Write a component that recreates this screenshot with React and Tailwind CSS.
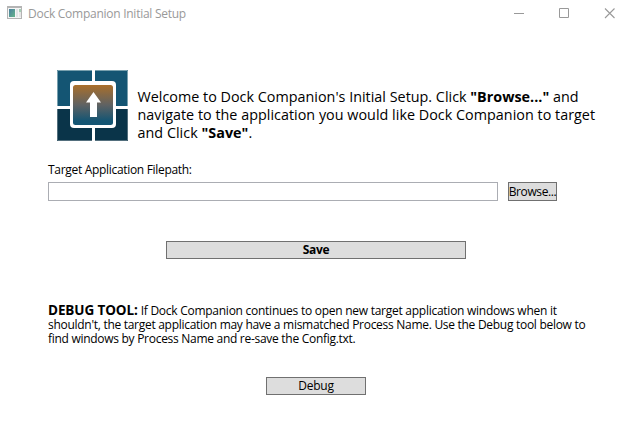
import React from "react";

function WindowIcon() {
  return (
    <svg className="block h-[13px] w-[15px]" viewBox="0 0 15 13" shapeRendering="crispEdges">
      <defs>
        <linearGradient id="pane" x1="0" y1="0" x2="1" y2="1">
          <stop offset="0" stopColor="#4a7f9f" />
          <stop offset="1" stopColor="#66b58a" />
        </linearGradient>
      </defs>
      <rect width="15" height="13" fill="#b4b4b4" />
      <rect x="1" y="2" width="13" height="10" fill="#f5f5f5" />
      <rect x="2" y="3" width="6" height="8" fill="url(#pane)" />
      <rect x="9" y="3" width="2" height="8" fill="#e2e4e6" />
      <rect x="12" y="3" width="2" height="3" fill="#a5cfb5" />
      <rect x="12" y="6" width="2" height="5" fill="#e6e6e6" />
    </svg>
  );
}

function TitleBar() {
  return (
    <header className="flex h-[30px] items-start pl-[7px] text-[#999999]">
      <div className="pt-[6px]"><WindowIcon /></div>
      <h1 className="ml-[6px] mt-[5px] w-[300px] whitespace-nowrap text-[12px] leading-[18px] tracking-[-0.26px]">
        Dock Companion Initial Setup
      </h1>
      <svg className="ml-[186px] mt-2 block h-[11px] w-[102px]" viewBox="0 0 102 11" fill="none" stroke="#999999">
        <path d="M0 5.5h10M45.5.5h9v9h-9z" />
        <path d="M91 .5l9.5 9.5M100.500 .5l-9.5 9.500" strokeWidth="1.1" />
      </svg>
    </header>
  );
}

function Logo() {
  return (
    <svg className="block h-[71px] w-[71px] shrink-0" viewBox="0 0 71 71">
      <defs>
        <linearGradient id="tile" x1="0" y1="0" x2="0" y2="1">
          <stop offset="0" stopColor="#a96f2b" />
          <stop offset="0.5" stopColor="#5f6263" />
          <stop offset="0.9" stopColor="#145573" />
          <stop offset="1" stopColor="#145573" />
        </linearGradient>
      </defs>
      <path fill="#145573" d="M0 0h35v36H0zM38 0h33v36H38z" />
      <path fill="#0a3449" d="M0 39h35v32H0zM38 39h33v32H38z" />
      <path fill="none" stroke="#78a0ae" d="M.5 36V.5H35M38 .5h32.500V36" />
      <path fill="none" stroke="#536f7d" d="M.5 39v31.500H35M38 70.500h32.500V39" />
      <rect x="13" y="11" width="46" height="47" rx="4" fill="#fff" />
      <rect x="16" y="15" width="40" height="40" rx="2.5" fill="url(#tile)" />
      <path fill="#fff" d="M36.500 22L44 32.500h-4V47h-7V32.500h-4z" />
    </svg>
  );
}

const button = "flex items-center justify-center whitespace-nowrap border border-[#707070] bg-[#dddddd] text-[12px] leading-none text-black";

export default function App() {
  return (
    <div className="h-[438px] w-[633px] overflow-hidden bg-white font-['Open_Sans','Noto_Sans',sans-serif] text-black">
      <TitleBar />
      <main className="pl-12">
        <section className="ml-[9px] flex pt-[40px]">
          <Logo />
          <p className="ml-[9.5px] mt-[18px] whitespace-nowrap text-[14.35px] leading-[18px]">
            <span className="block tracking-[0.01px]">Welcome to Dock Companion's Initial Setup. Click <b>"Browse..."</b> and</span>
            <span className="block tracking-[0.02px]">navigate to the application you would like Dock Companion to target</span>
            <span className="block tracking-[0.03px]">and Click <b>"Save"</b>.</span>
          </p>
        </section>
        <label className="mt-[19px] block h-[20px] text-[12px] leading-[18px] tracking-[-0.31px]">Target Application Filepath:</label>
        <div className="mt-px flex">
          <input className="h-[19px] w-[450px] border border-[#abadb3] bg-white outline-none" />
          <button className={button + " ml-[10px] h-[19px] w-[49px] tracking-[-0.4px]"}>Browse...</button>
        </div>
        <button className={button + " ml-[118px] mt-[40px] h-[18px] w-[300px] font-bold tracking-[-0.35px]"}>Save</button>
        <p className="mt-[43px] whitespace-nowrap text-[12px] tracking-[-0.285px]">
          <span className="block h-[16px] leading-[16px] tracking-[-0.26px]"><b className="text-[13.5px] tracking-[-0.1px]">DEBUG TOOL:</b> If Dock Companion continues to open new target application windows when it</span>
          <span className="block h-[14px] leading-[14px]">shouldn't, the target application may have a mismatched Process Name. Use the Debug tool below to</span>
          <span className="block h-[14px] leading-[14px]">find windows by Process Name and re-save the Config.txt.</span>
        </p>
        <button className={button + " ml-[218px] mt-[31px] h-[18px] w-[100px] tracking-[-0.2px]"}>Debug</button>
      </main>
    </div>
  );
}
